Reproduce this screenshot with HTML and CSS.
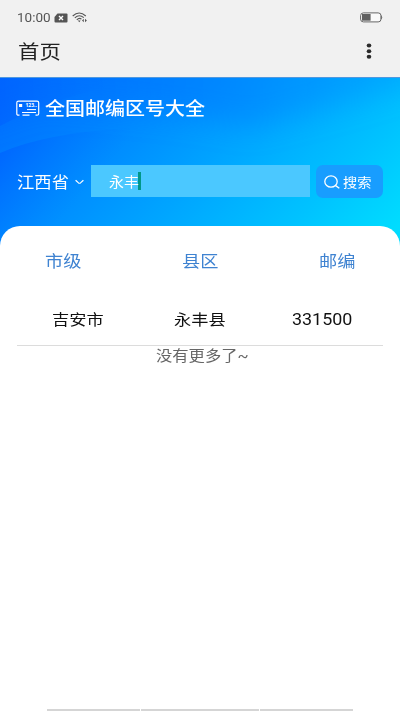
FILE: index.html
```html
<!DOCTYPE html>
<html lang="zh-CN">
<head>
<meta charset="utf-8">
<title>首页</title>
<link rel="stylesheet" href="styles.css">
</head>
<body>
<div class="status">
  <span class="wide clock">10:00</span>
  <svg class="simoff" width="14" height="10" viewBox="0 0 14 10"><path d="M3.5.5H12.5Q13.5.5 13.5 1.5V8.5Q13.5 9.5 12.5 9.5H1.5Q.5 9.5.5 8.5V4Z" fill="#555"/><path d="M5 3L9 7M9 3L5 7" stroke="#fff" stroke-width="1.4"/></svg>
  <svg class="wifi" width="16" height="12" viewBox="0 0 16 12" fill="none" stroke="#555" stroke-width="1.1"><path d="M.7 4Q7.2-2 13.8 4M2.8 5.9Q7.2 1.8 11.8 5.7M4.8 7.8Q7.2 5.3 9.5 7.2"/><path d="M5.8 8.5L8.6 8.4 7.3 10.2ZM10 8.4L11.8 6.8V10.2ZM13 6.8L14.9 8.4 13 10.2Z" fill="#555" stroke="none"/></svg>
  <svg class="battery" width="23" height="11" viewBox="0 0 23 11"><rect x=".6" y=".9" width="20.4" height="9" rx="2.8" fill="#fafafa" stroke="#666" stroke-width="1"/><path d="M2 2H10.6V8.7H2Z" fill="#606060"/><path d="M21.2 3.7Q22.6 5.4 21.2 7.1Z" fill="#666" stroke="#666" stroke-width=".6"/></svg>
</div>
<header class="bar">
  <h1 class="wide">首页</h1>
  <svg class="more" width="6" height="17" viewBox="0 0 6 17" fill="#2b2b2b"><ellipse cx="3" cy="2.6" rx="2.3" ry="2"/><ellipse cx="3" cy="8.2" rx="2.3" ry="2"/><ellipse cx="3" cy="13.8" rx="2.3" ry="2"/></svg>
</header>
<section class="hero">
  <svg class="backdrop" width="400" height="172" viewBox="0 0 400 172" preserveAspectRatio="none">
    <defs>
      <linearGradient id="sky" gradientUnits="userSpaceOnUse" x1="10" y1="0" x2="270" y2="270"><stop offset="0" stop-color="#006cff"/><stop offset=".25" stop-color="#0083ff"/><stop offset=".5" stop-color="#00a0ff"/><stop offset=".8" stop-color="#00c2ff"/><stop offset="1" stop-color="#00dcff"/></linearGradient>
      <linearGradient id="wave" gradientUnits="userSpaceOnUse" x1="0" y1="60" x2="75" y2="125"><stop offset="0" stop-color="#005fff" stop-opacity=".8"/><stop offset="1" stop-color="#0080ff" stop-opacity="0"/></linearGradient>
      <linearGradient id="corner" x1="0" y1="0" x2="1" y2="0"><stop offset="0" stop-color="#005eff" stop-opacity=".8"/><stop offset="1" stop-color="#006cff" stop-opacity="0"/></linearGradient>
      <linearGradient id="top" x1="0" y1="0" x2="1" y2="0"><stop offset="0" stop-color="#0066ff" stop-opacity=".6"/><stop offset=".5" stop-color="#007fff" stop-opacity=".7"/><stop offset="1" stop-color="#009bff" stop-opacity=".4"/></linearGradient>
      <filter id="soft" x="-20%" y="-40%" width="140%" height="180%"><feGaussianBlur stdDeviation="14"/></filter>
    </defs>
    <rect width="400" height="172" fill="url(#sky)"/>
    <path d="M-30-30H430V0Q330 30 250 48Q170 30 40 25L-30 50Z" fill="url(#top)" filter="url(#soft)"/>
    <path d="M0 75Q45 55 130 50V172H0Z" fill="url(#wave)"/>
    <path d="M0 48Q45 24 110 8V0H0Z" fill="url(#corner)" opacity=".6"/>
  </svg>
  <div class="brand">
    <svg width="24" height="17" viewBox="0 0 24 17" fill="none" stroke="#fff" stroke-width="1.2"><path d="M3.5 15.2H2.5Q.8 15.2.8 13.7V2.7Q.8 1.2 2.5 1.2H21Q22.7 1.2 22.7 2.7V13.7Q22.7 15.2 21 15.2H19.5M6.5 15.2H13.5"/><path d="M3 4H6.2V7H3Z" fill="#fff" stroke="none"/><path d="M11 9.6H20M6 12.5H20" stroke-width="1"/><text x="9.5" y="7.4" class="digits">123..</text></svg>
    <h2 class="wide">全国邮编区号大全</h2>
  </div>
  <div class="search">
    <div class="province"><span class="wide">江西省</span></div>
    <svg class="chevron" width="9" height="6" viewBox="0 0 9 6" fill="none" stroke="#fff" stroke-width="1.2"><path d="M.6 1.2L3.5 3.9Q4.5 4.6 5.5 3.9L8.4 1.2"/></svg>
    <div class="field"><span class="wide">永丰</span><i class="caret"></i></div>
    <div class="button">
      <svg width="16" height="14" viewBox="0 0 16 14" fill="none" stroke="#fff" stroke-width="1.3"><ellipse cx="7" cy="6.5" rx="6.2" ry="5.7"/><path d="M11.3 10.4L15.3 13.3"/></svg>
      <span class="wide">搜索</span>
    </div>
  </div>
</section>
<main class="sheet">
  <div class="row heads"><span class="wide">市级</span><span class="wide">县区</span><span class="wide">邮编</span></div>
  <div class="row values"><span class="wide">吉安市</span><span class="wide">永丰县</span><span class="wide num">331500</span></div>
  <p class="end"><span class="wide">没有更多了~</span></p>
</main>
<footer class="nav"><i></i><i></i><i></i></footer>
</body>
</html>
```
FILE: styles.css
```css
* { box-sizing: border-box; }
body {
  margin: 0; width: 400px; height: 711px; overflow: hidden;
  display: flex; flex-direction: column; background: #fff;
  font-family: Roboto, "Noto Sans CJK SC", sans-serif; color: #222;
}
svg { display: block; flex: none; }
h1, h2, p { margin: 0; font-weight: 400; }
/* Letterforms are drawn slightly extended throughout the app. */
.wide { display: inline-block; white-space: nowrap; transform: scaleX(1.125); transform-origin: left center; }

.status { height: 34px; flex: none; display: flex; align-items: center; padding: 1px 17px 0; background: #f1f1f1; }
.clock { width: 37px; font-size: 12px; color: #555; }
.simoff { margin-right: 4px; }
.battery { margin-left: auto; }
.bar { height: 43px; flex: none; display: flex; justify-content: space-between; padding: 0 28px 0 18px; background: #f1f1f1; }
.bar h1 { font-size: 19px; line-height: 37px; color: #222; }
.more { margin-top: 9px; }

.hero { position: relative; flex: none; height: 149px; color: #fff; border-top: 1px solid #4f98df; }
.backdrop { position: absolute; left: 0; top: 0; z-index: -1; }
.brand { display: flex; align-items: center; gap: 5px; height: 61px; padding-left: 16px; }
.brand h2 { font-size: 17.8px; line-height: 26px; font-weight: 500; }
.digits { font: 700 5px "Noto Sans", sans-serif; fill: #fff; stroke: none; }
.search { display: flex; align-items: center; margin-top: 26px; height: 33px; padding-left: 17px; }
.province { width: 58px; padding-top: 2px; font-size: 15.4px; line-height: 24px; }
.chevron { margin-right: 7px; }
.field { display: flex; align-self: flex-start; align-items: center; width: 219px; height: 32px; padding-left: 17.5px; background: #4bc8ff; font-size: 13.3px; }
.caret { width: 2.5px; height: 18px; margin-left: 3px; background: #009688; }
.button { display: flex; align-items: center; gap: 3px; width: 67px; height: 33px; margin-left: 6px; padding-left: 8px; border-radius: 7px; background: #189dff; font-size: 12.7px; }

.sheet { position: relative; flex: 1; background: #fff; border-radius: 20px 20px 0 0; padding: 0 17px; }
.row { display: grid; }
.heads { grid-template-columns: 137px 137px 1fr; height: 68px; padding-left: 28px; align-items: center; font-size: 16.2px; color: #3f83d1; }
.values { grid-template-columns: 122px 118px 1fr; height: 52px; padding-left: 35px; align-items: center; border-bottom: 1px solid #dcdcdc; font-size: 15.3px; line-height: 24px; color: #111; }
.num { font-size: 15.9px; padding-top: 1px; }
.end { padding: 1px 0 0 139px; font-size: 14.5px; line-height: 20px; color: #666; }
.nav { display: grid; grid-template-columns: 93px 118px 93px; gap: 1px; flex: none; height: 2px; width: 306px; margin: 0 auto; }
.nav i { background: #d5d5d5; }
```
